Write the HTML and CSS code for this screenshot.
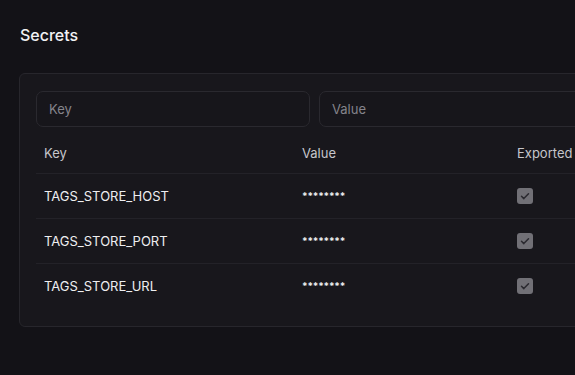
FILE: index.html
```html
<!DOCTYPE html>
<html>
<head>
  <title>Secrets</title>
  <link rel="stylesheet" href="styles.css">
</head>
<body>
  <div class="page">
    <h2 class="title">Secrets</h2>

    <div class="card">
      <div class="filters">
        <input type="text" class="filter" placeholder="Key">
        <input type="text" class="filter" placeholder="Value">
      </div>

      <table class="secrets">
        <thead>
          <tr>
            <th class="col-key">Key</th>
            <th class="col-value">Value</th>
            <th class="col-exported">Exported</th>
          </tr>
        </thead>
        <tbody>
          <tr>
            <td>TAGS_STORE_HOST</td>
            <td class="masked">********</td>
            <td><span class="check"><svg viewBox="0 0 16 16" width="16" height="16"><path d="M4.5 8.3l2.3 2.3 4.7-4.9" fill="none" stroke="#2b2a30" stroke-width="1.5" stroke-linecap="round" stroke-linejoin="round"/></svg></span></td>
          </tr>
          <tr>
            <td>TAGS_STORE_PORT</td>
            <td class="masked">********</td>
            <td><span class="check"><svg viewBox="0 0 16 16" width="16" height="16"><path d="M4.5 8.3l2.3 2.3 4.7-4.9" fill="none" stroke="#2b2a30" stroke-width="1.5" stroke-linecap="round" stroke-linejoin="round"/></svg></span></td>
          </tr>
          <tr>
            <td>TAGS_STORE_URL</td>
            <td class="masked">********</td>
            <td><span class="check"><svg viewBox="0 0 16 16" width="16" height="16"><path d="M4.5 8.3l2.3 2.3 4.7-4.9" fill="none" stroke="#2b2a30" stroke-width="1.5" stroke-linecap="round" stroke-linejoin="round"/></svg></span></td>
          </tr>
        </tbody>
      </table>
    </div>
  </div>
</body>
</html>
```

FILE: styles.css
```css
html, body {
  margin: 0;
  background: #131217;
  overflow: hidden;
}
body {
  font-family: Inter, "Liberation Sans", sans-serif;
  color: #ececef;
}
.page {
  padding: 24px 0 0 20px;
  width: 760px;
}
.title {
  margin: 0;
  font-size: 16px;
  font-weight: 500;
  line-height: 22px;
  color: #f2f2f4;
}
.card {
  margin-top: 27px;
  margin-left: -1px;
  padding: 17px 16px 18px;
  background: #18171c;
  border: 1px solid #27262c;
  border-radius: 6px;
}
.filters {
  display: grid;
  grid-template-columns: 274px 274px;
  gap: 9px;
}
.filter {
  height: 36px;
  box-sizing: border-box;
  padding: 0 12px;
  background: #17161b;
  border: 1px solid #2a292f;
  border-radius: 7px;
  color: #ececef;
  font-family: inherit;
  font-size: 13px;
  outline: none;
}
.filter::placeholder {
  color: #85848b;
}
.secrets {
  margin-top: 5px;
  border-collapse: collapse;
  font-size: 13px;
}
.secrets th {
  height: 41px;
  padding: 0 8px;
  text-align: left;
  font-weight: 400;
  color: #c6c6cb;
  border-bottom: 1px solid #232228;
}
.secrets td {
  height: 44px;
  padding: 0 8px;
  color: #eeeef0;
  border-bottom: 1px solid #232228;
}
.secrets tbody tr:last-child td {
  border-bottom: none;
}
.col-key { width: 242px; }
.col-value { width: 199px; }
.col-exported { width: 200px; }
.masked {
  font-size: 10px;
  font-weight: 700;
  letter-spacing: -0.2px;
}
.check {
  display: block;
  width: 16px;
  height: 16px;
  background: #717076;
  border-radius: 3px;
}
.check svg {
  display: block;
}
```
